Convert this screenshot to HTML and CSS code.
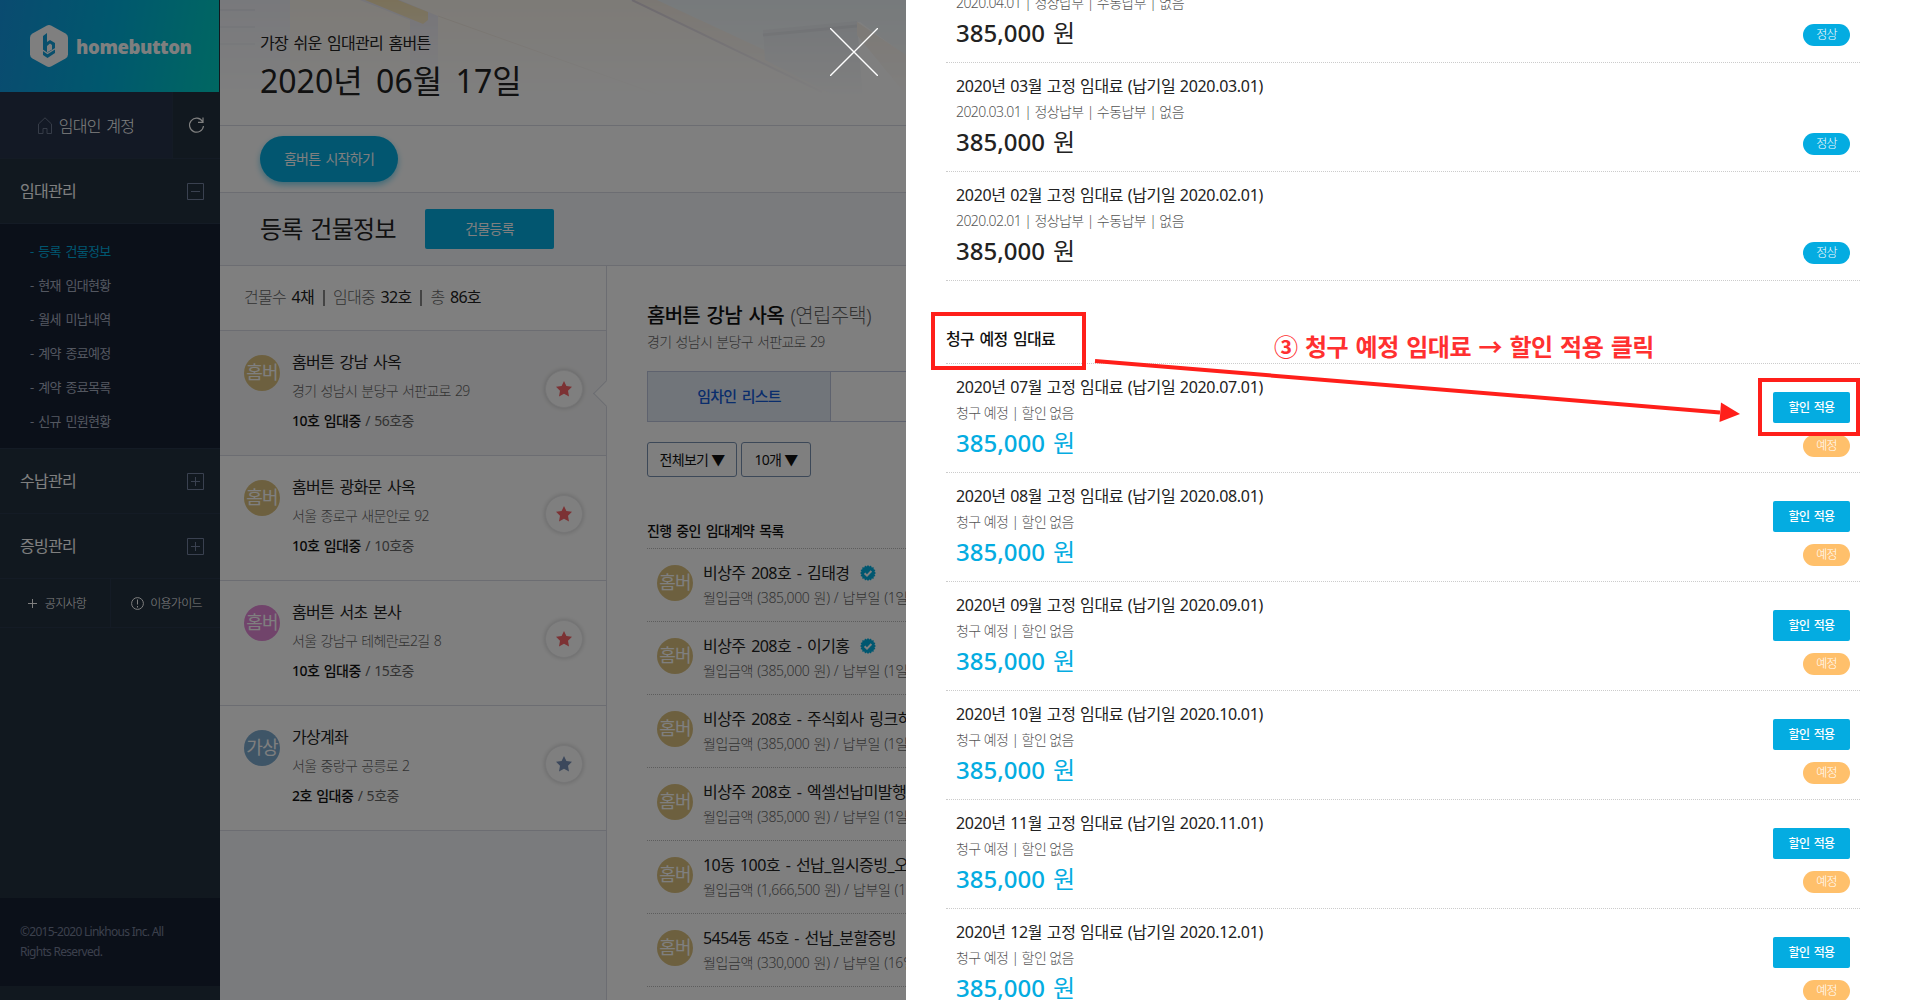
FILE: index.html
```html
<!DOCTYPE html>
<html lang="ko">
<head>
    <meta charset="UTF-8">
    <meta name="viewport" content="width=device-width, initial-scale=1.0">
    <title>홈버튼 임대관리</title>
    <link rel="stylesheet" href="styles.css">
</head>
<body>
    <svg class="defs" width="0" height="0">
        <symbol id="star" viewBox="0 0 16 16"><path d="M8 0l2.400 5 5.600.8-4 3.900 1 5.900L8 12.800l-5 2.800 1-5.900L0 5.800 5.600 5z"/></symbol>
        <symbol id="verified" viewBox="0 0 16 16">
            <path d="M8 0l1.300 1.500L11 .6l.7 1.800 2-.1-.1 2 1.800.7-.9 1.700L16 8l-1.500 1.300.9 1.700-1.800.7.1 2-2-.1-.7 1.800-1.700-.9L8 16l-1.300-1.500-1.700.9-.7-1.800-2 .1.1-2L.6 11l.9-1.700L0 8l1.500-1.300L.6 5l1.800-.7-.1-2 2 .1L5 .6l1.700.9z" fill="#00aee0"/>
            <path d="M4.600 8.200l2.400 2.400 4.400-4.600" fill="none" stroke="#fff" stroke-width="2"/>
        </symbol>
    </svg>

    <div class="page">
        <!-- 사이드 메뉴 -->
        <div class="sidebar">
            <div class="logo">
                <svg width="38" height="42" viewBox="0 0 38 42">
                    <path d="M16.500.7q2.500-1.300 5 0L35.500 8.500Q38 10 38 12.500v17q0 2.500-2.500 4L21.500 41.300q-2.500 1.300-5 0L2.500 33.500Q0 32 0 29.500v-17Q0 10 2.500 8.500z" fill="#fff"/>
                    <path d="M13 11l4-3v9l3-2 5 3v10l-7.500 5L13 30z" fill="#129fd8"/>
                    <path d="M17 21l3-2.500 2 1.500v4.500l-5 3z" fill="#fff"/>
                    <path d="M12.500 25l5 3.500 8-5" fill="none" stroke="#fff" stroke-width="1.200"/>
                </svg>
                <span>homebutton</span>
            </div>
            <div class="account">
                <div class="account-name">
                    <svg width="14" height="17" viewBox="0 0 14 17"><path d="M.5 7L7 .8 13.500 7v9.500H9v-5H5v5H.5z" fill="none" stroke="#6d7890"/></svg>
                    임대인 계정
                </div>
                <div class="refresh">
                    <svg width="17" height="17" viewBox="0 0 17 17"><path d="M14.500 4.500A7 7 0 1 0 15.500 9M15 .5v4.800h-5" fill="none" stroke="#fff" stroke-width="1.200"/></svg>
                </div>
            </div>
            <div class="menu">임대관리
                <svg width="17" height="17" viewBox="0 0 17 17"><path d="M.5.5h16v16H.5zM4 8.500h9" fill="none" stroke="#7482a0"/></svg>
            </div>
            <div class="submenu">
                <a class="on">- 등록 건물정보</a>
                <a>- 현재 임대현황</a>
                <a>- 월세 미납내역</a>
                <a>- 계약 종료예정</a>
                <a>- 계약 종료목록</a>
                <a>- 신규 민원현황</a>
            </div>
            <div class="menu">수납관리
                <svg width="17" height="17" viewBox="0 0 17 17"><path d="M.5.5h16v16H.5zM4 8.500h9M8.500 4v9" fill="none" stroke="#7482a0"/></svg>
            </div>
            <div class="menu">증빙관리
                <svg width="17" height="17" viewBox="0 0 17 17"><path d="M.5.5h16v16H.5zM4 8.500h9M8.500 4v9" fill="none" stroke="#7482a0"/></svg>
            </div>
            <div class="links">
                <div>
                    <svg width="9" height="9" viewBox="0 0 9 9"><path d="M0 4.500h9M4.500 0v9" stroke="#fff"/></svg>
                    <span>공지사항</span>
                </div>
                <div class="guide">
                    <svg width="13" height="13" viewBox="0 0 13 13"><path d="M.6 6.500a5.900 5.900 0 1 0 11.800 0a5.900 5.900 0 1 0-11.800 0M6.500 2.500v5M6.500 9v1.500" fill="none" stroke="#fff"/></svg>
                    <span>이용가이드</span>
                </div>
            </div>
            <div class="copyright">©2015-2020 Linkhous Inc. All<br>Rights Reserved.</div>
        </div>

        <!-- 본문 -->
        <div class="main">
            <div class="header">
                <svg class="photo" width="686" height="100" viewBox="0 0 686 100">
                    <defs>
                        <linearGradient id="fade" x1="0" y1="0" x2="0" y2="1"><stop offset="0" stop-color="#fff"/><stop offset="1" stop-color="#000"/></linearGradient>
                        <mask id="m"><rect width="686" height="100" fill="url(#fade)"/></mask>
                    </defs>
                    <g mask="url(#m)">
                        <path d="M0 0h70v100H0z" fill="#f1f2f8"/>
                        <path d="M0 10h35M0 27h35M0 44h35" stroke="#dcdee8"/>
                        <path d="M70 0h340l250 100H70z" fill="#fbf6ee"/>
                        <path d="M140 0l50 20v75h28V16L180 0z" fill="#eceaf2"/>
                        <path d="M145 0h33l30 12v8l-5 4z" fill="#f6e3b4"/>
                        <path d="M218 16l230 82" stroke="#f0e6da"/>
                        <path d="M410 0h276v56L640 22 600 26 650 100z" fill="#eef5f8"/>
                        <path d="M412 0h25l215 100h-30z" fill="#f7efe6"/>
                        <path d="M412 0l190 92" stroke="#dcd4dc" stroke-width="2"/>
                        <path d="M543 30l94-9 6 79h-20l-78-40z" fill="#e6ebf1"/>
                        <path d="M543 35l94-9" stroke="#d9dde4" stroke-width="3"/>
                        <path d="M637 22l49 33v40l-49-60z" fill="#f9f0e6"/>
                    </g>
                </svg>
                <p>가장 쉬운 임대관리 홈버튼</p>
                <h1>2020년 06월 17일</h1>
            </div>
            <div class="start"><button class="pill">홈버튼 시작하기</button></div>
            <div class="title">
                <h2>등록 건물정보</h2>
                <button>건물등록</button>
            </div>
            <div class="columns">
                <div class="buildings">
                    <div class="count">건물수 <b>4채</b> <i></i> 임대중 <b>32호</b> <i></i> 총 <b>86호</b></div>
                    <div class="building selected">
                        <span class="avatar">홈버</span>
                        <div class="info"><p>홈버튼 강남 사옥</p><p class="addr">경기 성남시 분당구 서판교로 29</p><p class="rooms"><b>10호 임대중</b> / 56호중</p></div>
                        <span class="fav"><svg width="16" height="16"><use href="#star"/></svg></span>
                    </div>
                    <div class="building">
                        <span class="avatar">홈버</span>
                        <div class="info"><p>홈버튼 광화문 사옥</p><p class="addr">서울 종로구 새문안로 92</p><p class="rooms"><b>10호 임대중</b> / 10호중</p></div>
                        <span class="fav"><svg width="16" height="16"><use href="#star"/></svg></span>
                    </div>
                    <div class="building">
                        <span class="avatar pink">홈버</span>
                        <div class="info"><p>홈버튼 서초 본사</p><p class="addr">서울 강남구 테헤란로2길 8</p><p class="rooms"><b>10호 임대중</b> / 15호중</p></div>
                        <span class="fav"><svg width="16" height="16"><use href="#star"/></svg></span>
                    </div>
                    <div class="building">
                        <span class="avatar blue">가상</span>
                        <div class="info"><p>가상계좌</p><p class="addr">서울 중랑구 공릉로 2</p><p class="rooms"><b>2호 임대중</b> / 5호중</p></div>
                        <span class="fav off"><svg width="16" height="16"><use href="#star"/></svg></span>
                    </div>
                </div>
                <div class="detail">
                    <h3>홈버튼 강남 사옥 <span>(연립주택)</span></h3>
                    <p class="detail-addr">경기 성남시 분당구 서판교로 29</p>
                    <div class="tabs"><div class="tab">임차인 리스트</div></div>
                    <div class="filters"><button>전체보기 ▼</button><button>10개 ▼</button></div>
                    <h4>진행 중인 임대계약 목록</h4>
                    <div class="contract"><span class="avatar">홈버</span><div><p>비상주 208호 - 김태경 <svg width="16" height="16"><use href="#verified"/></svg></p><p class="pay">월입금액 (385,000 원) / 납부일 (1일)</p></div></div>
                    <div class="contract"><span class="avatar">홈버</span><div><p>비상주 208호 - 이기홍 <svg width="16" height="16"><use href="#verified"/></svg></p><p class="pay">월입금액 (385,000 원) / 납부일 (1일)</p></div></div>
                    <div class="contract"><span class="avatar">홈버</span><div><p>비상주 208호 - 주식회사 링크하우스</p><p class="pay">월입금액 (385,000 원) / 납부일 (1일)</p></div></div>
                    <div class="contract"><span class="avatar">홈버</span><div><p>비상주 208호 - 엑셀선납미발행</p><p class="pay">월입금액 (385,000 원) / 납부일 (1일)</p></div></div>
                    <div class="contract"><span class="avatar">홈버</span><div><p>10동 100호 - 선납_일시증빙_오</p><p class="pay">월입금액 (1,666,500 원) / 납부일 (1일)</p></div></div>
                    <div class="contract"><span class="avatar">홈버</span><div><p>5454동 45호 - 선납_분할증빙</p><p class="pay">월입금액 (330,000 원) / 납부일 (16일)</p></div></div>
                    <div class="list-end"></div>
                </div>
            </div>
        </div>
    </div>

    <div class="overlay">
        <svg class="close" width="48" height="48" viewBox="0 0 48 48"><path d="M0 0l48 48M48 0L0 48" stroke="#fff" stroke-width="1.400"/></svg>
    </div>

    <!-- 임대료 내역 -->
    <div class="drawer">
        <div class="rent">
            <div><p class="state">2020.04.01 | 정상납부 | 수동납부 | 없음</p><p class="price"><b>385,000</b> 원</p></div>
            <div class="side"><span class="badge">정상</span></div>
        </div>
        <div class="rent">
            <div><p>2020년 03월 고정 임대료 (납기일 2020.03.01)</p><p class="state">2020.03.01 | 정상납부 | 수동납부 | 없음</p><p class="price"><b>385,000</b> 원</p></div>
            <div class="side"><span class="badge">정상</span></div>
        </div>
        <div class="rent">
            <div><p>2020년 02월 고정 임대료 (납기일 2020.02.01)</p><p class="state">2020.02.01 | 정상납부 | 수동납부 | 없음</p><p class="price"><b>385,000</b> 원</p></div>
            <div class="side"><span class="badge">정상</span></div>
        </div>
        <h4 class="expected">청구 예정 임대료</h4>
        <div class="rent wait">
            <div><p>2020년 07월 고정 임대료 (납기일 2020.07.01)</p><p class="state">청구 예정 | 할인 없음</p><p class="price"><b>385,000</b> 원</p></div>
            <div class="side"><button>할인 적용</button><span class="badge">예정</span></div>
        </div>
        <div class="rent wait">
            <div><p>2020년 08월 고정 임대료 (납기일 2020.08.01)</p><p class="state">청구 예정 | 할인 없음</p><p class="price"><b>385,000</b> 원</p></div>
            <div class="side"><button>할인 적용</button><span class="badge">예정</span></div>
        </div>
        <div class="rent wait">
            <div><p>2020년 09월 고정 임대료 (납기일 2020.09.01)</p><p class="state">청구 예정 | 할인 없음</p><p class="price"><b>385,000</b> 원</p></div>
            <div class="side"><button>할인 적용</button><span class="badge">예정</span></div>
        </div>
        <div class="rent wait">
            <div><p>2020년 10월 고정 임대료 (납기일 2020.10.01)</p><p class="state">청구 예정 | 할인 없음</p><p class="price"><b>385,000</b> 원</p></div>
            <div class="side"><button>할인 적용</button><span class="badge">예정</span></div>
        </div>
        <div class="rent wait">
            <div><p>2020년 11월 고정 임대료 (납기일 2020.11.01)</p><p class="state">청구 예정 | 할인 없음</p><p class="price"><b>385,000</b> 원</p></div>
            <div class="side"><button>할인 적용</button><span class="badge">예정</span></div>
        </div>
        <div class="rent wait">
            <div><p>2020년 12월 고정 임대료 (납기일 2020.12.01)</p><p class="state">청구 예정 | 할인 없음</p><p class="price"><b>385,000</b> 원</p></div>
            <div class="side"><button>할인 적용</button><span class="badge">예정</span></div>
        </div>
    </div>

    <!-- 안내 표시 -->
    <div class="mark mark-title"></div>
    <div class="mark mark-button"></div>
    <svg class="arrow" width="660" height="80" viewBox="0 0 660 80">
        <path d="M5 11l625 51.500" stroke="#ff1f1a" stroke-width="4"/>
        <path d="M631 52.500l19 11.500-20.500 8z" fill="#ff1f1a"/>
    </svg>
    <div class="guide-text">③ 청구 예정 임대료 → 할인 적용 클릭</div>
</body>
</html>
```
FILE: styles.css
```css
* {
    margin: 0;
    padding: 0;
    box-sizing: border-box;
}
html {
    overflow: hidden;
}
body {
    width: 1920px;
    height: 1000px;
    overflow: hidden;
    position: relative;
    background: #fff;
    color: #222;
    font-family: "Noto Sans", "Noto Sans CJK KR", sans-serif;
    font-size: 16px;
    letter-spacing: -0.045em;
    word-spacing: 0.13em;
    white-space: nowrap;
}
button {
    font: inherit;
    letter-spacing: inherit;
    word-spacing: inherit;
    border: none;
    background: #04ace1;
    color: #fff;
}
svg {
    display: block;
    flex: none;
}
b {
    font-weight: 500;
}
.defs {
    position: absolute;
}
.page {
    display: flex;
    height: 1000px;
    overflow: hidden;
}

/* 사이드 메뉴 */
.sidebar {
    width: 220px;
    flex: none;
    display: flex;
    flex-direction: column;
    background: #22303e;
    color: #fff;
}
.logo {
    height: 92px;
    margin-right: 1px;
    padding: 0 0 0 30px;
    display: flex;
    align-items: center;
    gap: 8px;
    background: linear-gradient(100deg, #1496e0, #00b0dc 50%, #00cfc4);
    font-family: "Open Sans", sans-serif;
    font-size: 18.5px;
    font-weight: 800;
    letter-spacing: -0.4px;
}
.account {
    display: flex;
    height: 67px;
    border-bottom: 1px solid #29364a;
    font-weight: 300;
}
.account-name {
    width: 173px;
    display: flex;
    align-items: center;
    justify-content: center;
    gap: 7px;
    border-right: 1px solid #29364a;
    background: #27334a;
}
.refresh {
    flex: 1;
    display: flex;
    align-items: center;
    justify-content: center;
}
.menu {
    height: 65px;
    padding: 0 16px 2px 20px;
    display: flex;
    align-items: center;
    justify-content: space-between;
    border-bottom: 1px solid #29364a;
}
.menu svg {
    position: relative;
    top: 1px;
}
.submenu {
    height: 225px;
    padding: 10px 0 0 30px;
    border-bottom: 1px solid #29364a;
    background: #172032;
    color: #a7afc1;
    font-size: 13px;
}
.submenu a {
    display: block;
    line-height: 34px;
}
.submenu .on {
    color: #00aee0;
}
.links {
    display: flex;
    height: 49px;
    border-bottom: 1px solid #29364a;
    font-size: 12px;
    font-weight: 300;
}
.links div {
    width: 111px;
    display: flex;
    align-items: center;
    justify-content: center;
    gap: 8px;
    padding-left: 4px;
    border-right: 1px solid #29364a;
}
.links .guide {
    width: 109px;
    gap: 6px;
    padding-left: 2px;
    border: none;
}
.copyright {
    height: 88px;
    margin: auto 0 14px;
    padding: 24px 20px;
    background: #172032;
    color: #77809a;
    font-size: 12px;
    line-height: 20px;
    word-spacing: 0;
}

/* 본문 */
.main {
    width: 1700px;
}
.header {
    position: relative;
    height: 126px;
    padding: 31px 0 0 40px;
    border-bottom: 1px solid #d8dbe4;
}
.photo {
    position: absolute;
    left: 0;
    top: 0;
}
.header p, .header h1 {
    position: relative;
}
.header p {
    line-height: 24px;
}
.header h1 {
    font-size: 32px;
    font-weight: 400;
    line-height: 46px;
    margin-top: 3px;
    letter-spacing: 0;
    word-spacing: 0.16em;
}
.start {
    height: 67px;
    padding: 10px 40px;
    border-bottom: 1px solid #d8dbe4;
}
.pill {
    width: 138px;
    height: 46px;
    padding-bottom: 2px;
    border-radius: 23px;
    font-size: 14px;
    box-shadow: 0 3px 6px rgba(0, 172, 225, 0.5);
}
.title {
    height: 73px;
    padding-left: 40px;
    display: flex;
    align-items: center;
    gap: 28px;
    background: #f4f6fb;
    border-bottom: 1px solid #d8dbe4;
}
.title h2 {
    font-size: 24px;
    font-weight: 400;
    width: 137px;
    padding-bottom: 4px;
}
.title button {
    width: 129px;
    height: 40px;
    padding-bottom: 2px;
    border-radius: 2px;
    font-size: 14px;
}
.columns {
    display: flex;
    height: 734px;
}
.buildings {
    width: 387px;
    flex: none;
    border-right: 1px solid #d8dbe4;
    background: #f4f6fb;
}
.count {
    height: 65px;
    padding-left: 24px;
    line-height: 62px;
    background: #fff;
    border-bottom: 1px solid #d8dbe4;
    color: #666;
    font-weight: 300;
}
.count b {
    color: #222;
    font-weight: 400;
}
.count i {
    display: inline-block;
    width: 2px;
    height: 16px;
    margin: 0 3px;
    background: #888;
    vertical-align: -3px;
}
.building {
    position: relative;
    height: 125px;
    padding: 20px 23px 0 24px;
    display: flex;
    background: #fff;
    border-bottom: 1px solid #d8dbe4;
}
.building.selected {
    background: #f7f7f8;
}
.selected::after {
    content: "";
    position: absolute;
    right: -10px;
    top: 53px;
    width: 18px;
    height: 18px;
    background: #fff;
    border: solid #d8dbe4;
    border-width: 0 0 1px 1px;
    transform: rotate(45deg);
}
.avatar {
    width: 36px;
    height: 36px;
    margin-top: 4px;
    flex: none;
    border-radius: 50%;
    background: #dbc17f;
    color: #fff;
    font-size: 18px;
    line-height: 34px;
    text-align: center;
}
.avatar.pink {
    background: #e288d6;
}
.avatar.blue {
    background: #7daace;
}
.info {
    flex: 1;
    padding-left: 12px;
}
.info p {
    line-height: 22px;
}
.info .addr {
    margin-top: 7px;
    font-size: 14px;
    font-weight: 300;
    color: #666;
    letter-spacing: -0.05em;
    word-spacing: 0.09em;
}
.info .rooms {
    margin-top: 8px;
    font-size: 14px;
    color: #666;
    letter-spacing: -0.035em;
    word-spacing: 0.08em;
}
.rooms b {
    color: #111;
}
.fav {
    width: 38px;
    height: 38px;
    margin-top: 19px;
    display: flex;
    align-items: center;
    justify-content: center;
    border-radius: 50%;
    background: #fff;
    border: 1px solid #ececee;
    box-shadow: 0 0 5px rgba(0, 0, 0, 0.2);
    fill: #f96468;
}
.fav.off {
    fill: #7890b8;
}
.detail {
    flex: 1;
    padding: 36px 40px 0;
    background: #fff;
}
.detail h3 {
    font-size: 20px;
    line-height: 28px;
    font-weight: 500;
    color: #111;
}
.detail h3 span {
    font-weight: 300;
    color: #666;
}
.detail-addr {
    font-size: 14px;
    line-height: 22px;
    margin-top: 1px;
    font-weight: 300;
    color: #666;
    letter-spacing: -0.05em;
    word-spacing: 0.09em;
}
.tabs {
    display: flex;
    height: 51px;
    margin-top: 18px;
    border: 1px solid #bcc4dc;
}
.tab {
    width: 183px;
    border-right: 1px solid #bcc4dc;
    background: #e3eaf5;
    color: #145ad8;
    font-size: 15px;
    font-weight: 500;
    line-height: 49px;
    text-align: center;
}
.filters {
    display: flex;
    gap: 4px;
    margin-top: 20px;
}
.filters button {
    width: 90px;
    height: 35px;
    padding-bottom: 2px;
    border: 1px solid #7890b0;
    border-radius: 3px;
    background: #fff;
    color: #111;
    font-size: 14px;
    word-spacing: 0;
}
.filters button + button {
    width: 70px;
}
.detail h4 {
    height: 71px;
    padding-top: 43px;
    line-height: 22px;
    font-size: 14px;
    font-weight: 500;
    color: #111;
}
.contract {
    display: flex;
    gap: 10px;
    height: 73px;
    padding: 12px 10px 0;
    border-top: 1px dotted #bbb;
}
.list-end {
    border-top: 1px dotted #bbb;
}
.contract p {
    display: flex;
    gap: 10px;
    align-items: center;
    line-height: 24px;
    letter-spacing: -0.035em;
}
.contract .pay {
    display: block;
    font-size: 14px;
    font-weight: 300;
    color: #666;
    line-height: 22px;
    margin-top: 2px;
    letter-spacing: -0.025em;
    word-spacing: 0.06em;
}

.overlay {
    position: absolute;
    left: 0;
    top: 0;
    width: 906px;
    height: 1000px;
    background: rgba(0, 0, 0, 0.5);
}
.close {
    position: absolute;
    left: 830px;
    top: 28px;
}

/* 임대료 내역 */
.drawer {
    position: absolute;
    left: 906px;
    top: 0;
    width: 1014px;
    height: 1000px;
    padding: 0 60px 0 40px;
    overflow: hidden;
    background: #fff;
}
.rent {
    display: flex;
    justify-content: space-between;
    height: 109px;
    padding: 11px 10px 0;
    border-bottom: 1px dotted #ccc;
}
/* 위로 스크롤된 첫 행 */
.rent:first-child {
    height: 63px;
    padding-top: 0;
}
.rent:first-child .state {
    margin-top: -9px;
}
.rent p {
    line-height: 24px;
    letter-spacing: -0.02em;
    word-spacing: 0.04em;
}
.rent .state {
    margin-top: 2px;
    font-size: 14px;
    font-weight: 300;
    color: #555;
    letter-spacing: -0.04em;
    word-spacing: 0;
}
.rent .price {
    margin-top: 1px;
    font-size: 24px;
    line-height: 34px;
    letter-spacing: 0;
    word-spacing: 0.08em;
}
.wait .price {
    color: #04ace1;
}
.side {
    display: flex;
    flex-direction: column;
    justify-content: flex-end;
    align-items: flex-end;
    gap: 12px;
    padding-bottom: 16px;
}
.badge {
    width: 47px;
    height: 22px;
    border-radius: 11px;
    background: #04ace1;
    color: #fff;
    font-size: 12px;
    font-weight: 300;
    line-height: 21px;
    text-align: center;
}
.wait .badge {
    background: #ffc06b;
}
.side button {
    width: 77px;
    height: 31px;
    border-radius: 2px;
    font-size: 12px;
    line-height: 29px;
    font-weight: 500;
}
.wait .side {
    padding-bottom: 15px;
}
.expected {
    height: 83px;
    padding-top: 46px;
    line-height: 24px;
    font-size: 16px;
    font-weight: 500;
    color: #111;
    border-bottom: 1px dotted #ccc;
}

/* 안내 표시 */
.mark {
    position: absolute;
    border: 4px solid #ff1f1a;
}
.mark-title {
    left: 931px;
    top: 312px;
    width: 155px;
    height: 58px;
}
.mark-button {
    left: 1758px;
    top: 378px;
    width: 102px;
    height: 58px;
}
.arrow {
    position: absolute;
    left: 1090px;
    top: 350px;
}
.guide-text {
    position: absolute;
    left: 1274px;
    top: 329px;
    color: #ff3030;
    font-family: "Noto Sans CJK KR", sans-serif;
    font-size: 24px;
    font-weight: 700;
    line-height: 34px;
    letter-spacing: -0.02em;
    word-spacing: 0.05em;
}
```
